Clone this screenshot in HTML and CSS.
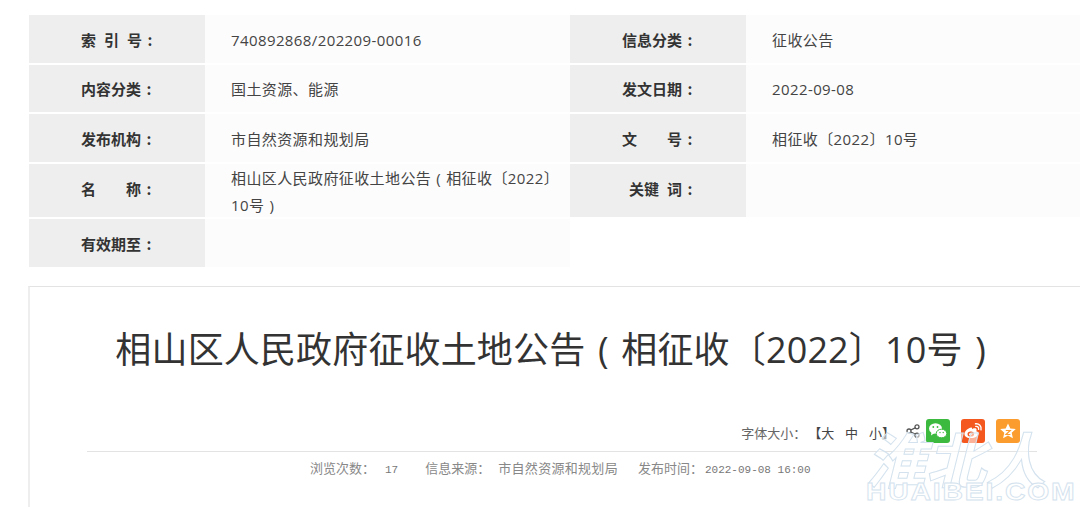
FILE: index.html
```html
<!DOCTYPE html>
<html lang="zh-CN">
<head>
<meta charset="utf-8">
<title>相山区人民政府征收土地公告</title>
<link rel="stylesheet" href="styles.css">
</head>
<body>
<div class="page">
  <div class="info">
    <div class="lab"><span class="sp1">索引号</span><span class="c">:</span></div><div class="val">740892868/202209-00016</div>
    <div class="lab">信息分类<span class="c">:</span></div><div class="val">征收公告</div>
    <div class="lab">内容分类<span class="c">:</span></div><div class="val">国土资源、能源</div>
    <div class="lab">发文日期<span class="c">:</span></div><div class="val">2022-09-08</div>
    <div class="lab">发布机构<span class="c">:</span></div><div class="val">市自然资源和规划局</div>
    <div class="lab"><span class="sp2">文号</span><span class="c">:</span></div><div class="val">相征收〔2022〕10号</div>
    <div class="lab tall"><span class="sp2">名称</span><span class="c">:</span></div><div class="val multi"><span>相山区人民政府征收土地公告<span class="pn">(</span>相征收〔2022〕10号<span class="pn">)</span></span></div>
    <div class="lab tall kw">关键<span class="gap">词</span><span class="c">:</span></div><div class="val"></div>
    <div class="lab">有效期至<span class="c">:</span></div><div class="val"></div>
  </div>
  <div class="article">
    <h1 class="title">相山区人民政府征收土地公告<span class="pn">(</span>相征收〔2022〕10号<span class="pn">)</span></h1>
    <div class="tools">
      <span class="fs">字体大小：</span><span class="sizes">【大 中 小】</span>
      <svg class="share" viewBox="0 0 14 14" width="14" height="14"><g fill="none" stroke="#555" stroke-width="1.3"><circle cx="3" cy="7" r="2"/><circle cx="11" cy="2.8" r="2"/><circle cx="11" cy="11.2" r="2"/><path d="M4.8 6 9.2 3.8M4.8 8 9.2 10.2"/></g></svg>
      <svg class="ico" viewBox="0 0 24 24" width="24" height="24"><rect width="24" height="24" rx="3" fill="#3cba3f"/><ellipse cx="9.5" cy="9.5" rx="6.5" ry="5.3" fill="#fff"/><path d="M5.5 13 5 16.500 8.500 14z" fill="#fff"/><ellipse cx="15.500" cy="14.500" rx="5.300" ry="4.300" fill="#fff" stroke="#3cba3f" stroke-width="1"/><circle cx="7.300" cy="8" r=".9" fill="#3cba3f"/><circle cx="11.500" cy="8" r=".9" fill="#3cba3f"/><circle cx="14" cy="13.500" r=".7" fill="#3cba3f"/><circle cx="17.200" cy="13.500" r=".7" fill="#3cba3f"/></svg>
      <svg class="ico" viewBox="0 0 24 24" width="24" height="24"><rect width="24" height="24" rx="3" fill="#f4581f"/><path d="M10 8.500C6 9.500 3 13 3.500 15.500 4 18.500 8 19.500 11.500 19 15.500 18.300 18 16 17.500 14 17.200 12.800 16 12.300 15.300 12.200 16 10.500 15.500 9.500 14.300 9.300 13 9.100 11.500 9.800 11 10.200 11.300 9 11 8.200 10 8.500z" fill="#fff"/><ellipse cx="9.800" cy="15" rx="3.300" ry="2.600" fill="#f4581f"/><circle cx="9.300" cy="15.300" r="1.200" fill="#fff"/><path d="M14.500 4.800C18 4.300 20.800 7 20 10.800M14.800 7.400C16.500 7.100 18 8.500 17.600 10.300" fill="none" stroke="#fff" stroke-width="1.400" stroke-linecap="round"/></svg>
      <svg class="ico" viewBox="0 0 24 24" width="24" height="24"><rect width="24" height="24" rx="3" fill="#fb9c2e"/><path d="M12 4.500 14.300 9.500 19.800 10.100 15.700 13.800 16.900 19.200 12 16.400 7.100 19.200 8.300 13.800 4.200 10.100 9.700 9.500z" fill="#fff"/><path d="M9.800 11.500h4.400L10 15.500h4.400" fill="none" stroke="#fb9c2e" stroke-width="1.200"/></svg>
    </div>
    <div class="meta">
      <span class="m1">浏览次数：<span class="num n1">17</span></span>
      <span class="m2">信息来源：<span class="n2">市自然资源和规划局</span></span>
      <span class="m3">发布时间：<span class="num n3">2022-09-08 16:00</span></span>
    </div>
  </div>
  <div class="wm">
    <div class="wm-cn">淮北人</div>
    <div class="wm-en">HUAIBEI.COM</div>
  </div>
</div>
</body>
</html>
```
FILE: styles.css
```css
* { box-sizing: border-box; }
html, body { margin: 0; padding: 0; background: #fff; overflow: hidden; }
body { width: 1080px; height: 507px; font-family: "Noto Sans CJK SC", "Liberation Sans", sans-serif; color: #333; }
.page { position: relative; width: 1080px; height: 507px; overflow: hidden; padding: 15px 0 0 29px; }
.info {
  display: grid;
  grid-template-columns: 176px 365px 176px 334px;
  grid-template-rows: 48px 47px 48px 53px 48px;
  row-gap: 2px;
  font-size: 15px;
}
.lab {
  background: #eee;
  font-weight: 700;
  color: #333;
  display: flex;
  align-items: center;
  padding-left: 52px;
}
.tall { padding-bottom: 5px; }
.kw { padding-left: 59px; }
.c { display: inline-block; width: 16px; text-align: center; }
.gap { margin-left: 8px; }
.val {
  background: #fcfcfc;
  display: flex;
  align-items: center;
  padding: 2px 8px 0 26px;
  font-family: "Open Sans", "Noto Sans CJK SC", sans-serif;
  color: #444;
  line-height: 27px;
  letter-spacing: .4px;
}
.pn { display: inline-block; width: 1em; text-align: center; }
.sp1 { letter-spacing: 8px; margin-right: -8px; }
.sp2 { letter-spacing: 30px; margin-right: -30px; }
.article {
  margin: 19px -5px 0 -1px;
  height: 240px;
  border: 1px solid #e3e3e3;
  border-left: 2px solid #eee;
  border-bottom: 0;
  padding: 0 57px;
}
.title {
  margin: 33px 0 0;
  font-family: "Open Sans", "Noto Sans CJK SC", sans-serif;
  font-size: 36px;
  font-weight: 400;
  line-height: 60px;
  letter-spacing: .15px;
  text-align: center;
  color: #333;
  white-space: nowrap;
}
.tools {
  margin: 38px -10px 0 0;
  height: 34px;
  display: flex;
  align-items: center;
  justify-content: flex-end;
  padding: 0 17px 8px 0;
  font-size: 13px;
  color: #666;
  border-bottom: 1px solid #e3e3e3;
}
.fs, .sizes { margin-top: 4px; }
.fs { margin-right: 2px; }
.sizes { color: #444; word-spacing: 8px; }
.share { margin: 0 6px 0 11px; }
.ico { margin-right: 11px; }
.ico:last-child { margin-right: 0; }
.meta {
  display: flex;
  font-size: 13px;
  line-height: 32px;
  color: #888;
  padding-left: 223px;
}
.m2 { margin-left: 27px; }
.m3 { margin-left: 20px; }
.n1 { margin-left: 10px; }
.n2 { margin-left: 8px; letter-spacing: .3px; }
.n3 { margin-left: 2px; }
.num { font-family: "Liberation Mono", monospace; font-size: 11px; color: #777; }
.wm { position: absolute; left: 866px; top: 432px; width: 214px; }
.wm-cn {
  font-size: 60px;
  line-height: 50px;
  font-weight: 700;
  white-space: nowrap;
  color: rgba(255,255,255,.55);
  -webkit-text-stroke: 1px #d3e2ee;
  transform: skewX(-14deg);
  transform-origin: left bottom;
}
.wm-en {
  font-family: "Liberation Sans", sans-serif;
  font-weight: 700;
  font-size: 23px;
  line-height: 20px;
  letter-spacing: 1.500px;
  white-space: nowrap;
  color: #fff;
  -webkit-text-stroke: .8px #d3e2ee;
  transform: scaleX(1.23);
  transform-origin: left center;
}
```
